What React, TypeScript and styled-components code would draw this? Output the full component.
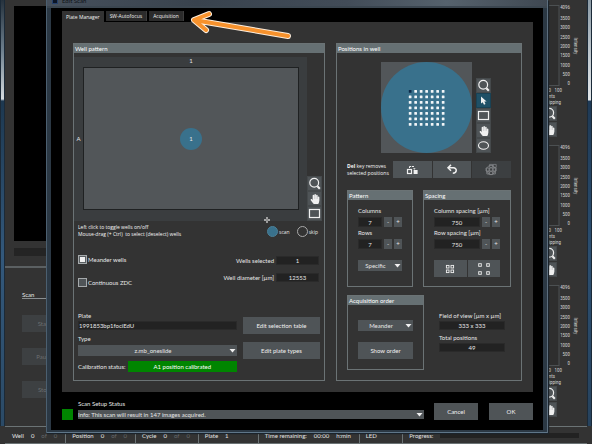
import React from "react";
import styled, { createGlobalStyle, css } from "styled-components";
import { FaHandPaper } from "react-icons/fa";

const GlobalStyle = createGlobalStyle`
  *, *::before, *::after { box-sizing: border-box; }
  body {
    margin: 0;
    background: #333333;
    color: #e6e6e6;
    font-family: Lato, "Open Sans", sans-serif;
    font-size: 6px;
    line-height: 8px;
  }
  button, input, select {
    margin: 0;
    padding: 0;
    border: 0;
    border-radius: 0;
    font: inherit;
    color: inherit;
  }
`;

const blue = "#39718c";
const line = "#6b7375";
const raised = "#4f5457";

const smallText = css`
  font-family: "Open Sans", sans-serif;
  font-size: 5px;
`;

/* ---------- main window ---------- */

const AppWindow = styled.div`
  position: relative;
  display: flex;
  flex-direction: column;
  min-height: 100vh;
  overflow: hidden;
  background: #333333;
`;

const WindowBody = styled.div`
  flex: 1;
  display: flex;
  justify-content: space-between;
`;

const WindowEdge = styled.div<{ $right?: boolean }>`
  width: 5px;
  background: ${(p) =>
    p.$right
      ? "linear-gradient(to bottom, #8b9aa5 0, #c3ccd2 60px, #e3e7ea 100px, #1f3a56 101px, #2d4f70 60%, #27435e)"
      : "linear-gradient(to bottom, #26323d 0, #6d7f8d 50px, #d5dbdf 99px, #1d3850 101px, #33587b 60%, #2b4a66)"};
  border-left: 1px solid #1b2a38;
  border-right: 1px solid #1b2a38;
`;

const LeftColumn = styled.div`
  display: flex;
  flex-direction: column;
  width: 105px;
  margin-right: auto;
`;

const CameraArea = styled.div`
  height: 235px;
  margin: 6px 0 0 9px;
  background: #000000;
`;

const CameraFooter = styled.div`
  height: 8px;
  margin: 7px 0 10px 9px;
  background: #242424;
`;

const ScanControls = styled.section`
  display: flex;
  flex-direction: column;
  gap: 16px;
  padding: 23px 0 0 17px;
  border-top: 2px solid #5b6062;
`;

const ScanHeading = styled.h2`
  margin: 0;
  font-size: 6px;
  font-weight: 400;
  line-height: 7px;
  border-bottom: 1px solid #8a8f91;
`;

const DimButton = styled.button`
  width: 44px;
  height: 17px;
  background: #3d4042;
  color: #6b6e70;
`;

const Histograms = styled.div`
  display: flex;
  flex-direction: column;
  width: 60px;
  padding-top: 5px;
`;

const HistogramBlock = styled.section`
  height: 140px;
`;

const HistogramSvg = styled.svg`
  display: block;
  font-family: "Liberation Sans Narrow", "Roboto Condensed", Lato, sans-serif;
  font-size: 5px;
  fill: #d0d0d0;
`;

const HistogramTools = styled.div`
  display: flex;
  flex-direction: column;
  gap: 1px;
  padding-left: 15px;
`;

const StatusBar = styled.footer`
  display: grid;
  grid-template-columns: 62fr 69fr 62fr 62fr 91fr 45fr 191fr;
  height: 18px;
  margin: 0 5px;
  border-top: 1px solid ${line};
  border-bottom: 1px solid ${line};
`;

const StatusCell = styled.div<{ $divided?: boolean }>`
  display: flex;
  align-items: center;
  gap: 7px;
  padding: 1px 8px 0 6px;
  white-space: nowrap;
  border-left: ${(p) => (p.$divided ? `1px solid ${line}` : "1px solid transparent")};
`;

const Dim = styled.span`
  color: #666a6c;
`;

const ProgressTrack = styled.div`
  flex: 1;
  height: 5px;
  background: #222222;
`;

/* ---------- dialog ---------- */

const Dialog = styled.div`
  position: absolute;
  top: 0;
  left: 46px;
  right: 44px;
  padding: 0 5px 3px;
  background: #2b3844;
  box-shadow: inset 1px 0 #4b5f70, inset -1px 0 #5c6e7e, inset 0 -1px #5f7689, 1px 1px 1px #1b232b;
`;

const TitleBar = styled.header`
  height: 8px;
  margin: 0 -4px;
  overflow: hidden;
  background: linear-gradient(to right, #46505c, #39434e 30%, #424c58 60%, #56626d 80%, #3f4852);
  border-bottom: 2px solid #3b4650;
`;

const TitleContent = styled.div`
  display: flex;
  gap: 4px;
  margin-top: -3px;
  padding-left: 5px;
  line-height: 8px;
  color: #0d1116;
`;

const TitleIcon = styled.span`
  width: 6px;
  height: 7px;
  background: #0b1526;
  border: 1px solid #25406b;
`;

const DialogBody = styled.div`
  padding: 3px 10px 10px 11px;
  background: #000000;
`;

const TabList = styled.div`
  display: flex;
  align-items: flex-end;
  gap: 2px;
`;

const Tab = styled.button<{ $active?: boolean }>`
  ${smallText}
  height: ${(p) => (p.$active ? 11 : 10)}px;
  margin-bottom: ${(p) => (p.$active ? 0 : 1)}px;
  padding: 0 4px;
  line-height: 8px;
  background: ${(p) => (p.$active ? "#333333" : "#2b2b2b")};
  color: #f2f2f2;
  border-right: ${(p) => (p.$active ? "0" : "1px solid #3d3d3d")};
`;

const TabPanel = styled.div`
  display: grid;
  grid-template-columns: 252fr 186fr;
  gap: 11px;
  padding: 21px 11px 11px;
  background: #333333;
`;

const Group = styled.section`
  border: 1px solid ${line};
  min-width: 0;
`;

const GroupTitle = styled.h3`
  height: 9px;
  margin: 0;
  padding-left: 1px;
  font-size: 6px;
  font-weight: 400;
  line-height: 9px;
  color: #ffffff;
  background: #667073;
`;

const Button = styled.button<{ $faded?: boolean }>`
  display: flex;
  align-items: center;
  justify-content: center;
  width: 100%;
  height: 17px;
  white-space: nowrap;
  background: ${(p) => (p.$faded ? "#3c3f41" : raised)};
  color: ${(p) => (p.$faded ? "#8a8d8f" : "#f0f0f0")};
`;

const ToolButton = styled.button<{ $active?: boolean }>`
  display: flex;
  align-items: center;
  justify-content: center;
  width: 15px;
  height: 15px;
  background: ${(p) => (p.$active ? "#1f5066" : raised)};
  border: 1px solid ${(p) => (p.$active ? "#1a4254" : "#45494b")};
  color: #f0f0f0;
`;

const field = css`
  display: block;
  width: 100%;
  min-width: 0;
  height: 9px;
  background: #222222;
  border: 1px solid #2a2a2a;
  line-height: 7px;
`;

const TextField = styled.input<{ $centered?: boolean }>`
  ${field}
  text-align: ${(p) => (p.$centered ? "center" : "left")};
`;

const StepField = styled(TextField)`
  height: 10px;
`;

const SelectWrap = styled.div<{ $short?: boolean }>`
  position: relative;
  height: ${(p) => (p.$short ? 9 : 11)}px;
  background: ${raised};
`;

const Select = styled.select<{ $centered?: boolean }>`
  display: block;
  width: 100%;
  height: 100%;
  padding-right: ${(p) => (p.$centered ? 9 : 0)}px;
  appearance: none;
  background: transparent;
  text-align: ${(p) => (p.$centered ? "center" : "left")};
  text-align-last: ${(p) => (p.$centered ? "center" : "left")};
`;

const SelectArrow = styled.svg`
  position: absolute;
  right: 1px;
  top: calc(50% - 2px);
  pointer-events: none;
`;

const Label = styled.label`
  display: block;
  height: 8px;
  white-space: nowrap;
`;

/* well pattern */

const PlateRow = styled.div`
  display: flex;
  align-items: flex-end;
  padding: 4px 2px 0 0;
`;

const PlateMap = styled.div`
  position: relative;
  flex: 1;
  display: grid;
  grid-template: 10px 1fr 11px / 9px 1fr 8px;
  height: 164px;
  background: #3a3d3f;
`;

const ColumnHead = styled.span`
  grid-column: 2;
  text-align: center;
`;

const RowHead = styled.span`
  grid-row: 2;
  align-self: center;
  text-align: center;
`;

const Plate = styled.div`
  grid-row: 2;
  grid-column: 2;
  display: flex;
  align-items: center;
  justify-content: center;
  background: #525659;
  border: 1px solid #1f2122;
`;

const Well = styled.button`
  width: 22px;
  height: 22px;
  border-radius: 50%;
  background: ${blue};
`;

const MoveCursor = styled.svg`
  position: absolute;
  right: 37px;
  bottom: -2px;
`;

const ToolColumn = styled.div`
  display: flex;
  flex-direction: column;
`;

const HintRow = styled.div`
  display: flex;
  justify-content: space-between;
  padding: 3px 6px 0 4px;
`;

const Hint = styled.p`
  ${smallText}
  margin: 0;
  line-height: 7px;
  white-space: nowrap;
  color: #f6f6f6;
`;

const Legend = styled.div`
  display: flex;
  gap: 7px;
  padding-top: 2px;
`;

const LegendItem = styled.span`
  ${smallText}
  display: flex;
  align-items: center;
  gap: 1px;
  height: 11px;
`;

const LegendDot = styled.span<{ $filled?: boolean }>`
  width: 11px;
  height: 11px;
  border-radius: 50%;
  background: ${(p) => (p.$filled ? blue : "transparent")};
  border: 1px solid ${(p) => (p.$filled ? "#4b7f97" : "#a8a8a8")};
`;

const Options = styled.div`
  display: flex;
  justify-content: space-between;
  padding: 17px 5px 0 4px;
`;

const CheckStack = styled.div`
  display: flex;
  flex-direction: column;
  gap: 14px;
`;

const CheckLabel = styled.label`
  display: flex;
  align-items: center;
  gap: 1px;
  height: 9px;
`;

const CheckBox = styled.input`
  appearance: none;
  width: 9px;
  height: 9px;
  border: 1px solid #a5a9ab;
  background: #4f5457;
  &:checked {
    background: #f0f0f0;
    box-shadow: inset 0 0 0 1px #5a5f62;
  }
`;

const ValueStack = styled.div`
  display: grid;
  grid-template-columns: auto 43px;
  gap: 8px 2px;
  align-content: start;
  align-items: center;
  padding-top: 1px;
  text-align: right;
`;

const PlateForm = styled.div`
  display: grid;
  grid-template-columns: 1fr 77px;
  gap: 6px;
  padding: 25px 4px 8px;
`;

const FormStack = styled.div`
  display: flex;
  flex-direction: column;
  gap: 5px;
`;

const Stacked = styled.div<{ $gap?: number }>`
  display: grid;
  gap: ${(p) => p.$gap ?? 1}px;
`;

const ButtonStack = styled.div`
  display: flex;
  flex-direction: column;
  gap: 8px;
  padding-top: 5px;
`;

const Calibration = styled.div`
  display: flex;
  align-items: center;
  gap: 2px;
  white-space: nowrap;
`;

const CalibrationBadge = styled.output`
  flex: 1;
  height: 11px;
  line-height: 11px;
  text-align: center;
  color: #ffffff;
  background: #008500;
`;

/* positions in well */

const WellViewRow = styled.div`
  display: flex;
  align-items: flex-end;
  justify-content: center;
  gap: 4px;
  padding: 9px 0 0 14px;
`;

const WellView = styled.svg`
  display: block;
  background: #525659;
`;

const PositionActions = styled.div`
  display: grid;
  grid-template-columns: 1fr 118px;
  padding: 8px 10px 0;
`;

const PositionHint = styled(Hint)`
  align-self: center;
`;

const ActionButtons = styled.div`
  display: grid;
  grid-auto-flow: column;
  grid-auto-columns: 1fr;
  gap: 1px;
`;

const Settings = styled.div`
  display: grid;
  grid-template-columns: 66fr 88fr;
  gap: 10px;
  padding: 12px 10px 0;
`;

const SettingsBody = styled.div`
  display: flex;
  flex-direction: column;
  gap: 2px;
  padding: 7px 10px 9px;
`;

const Stepper = styled.div`
  display: grid;
  grid-template-columns: 1fr 8px 8px;
  gap: 2px;
  height: 10px;
  align-items: stretch;
`;

const StepButton = styled.button`
  background: ${raised};
  line-height: 8px;
`;

const SettingsFooter = styled.div`
  padding-top: 9px;
`;

const OrderRow = styled.div`
  display: grid;
  grid-template-columns: 77fr 66fr;
  gap: 15px;
  padding: 8px 16px 9px 10px;
`;

const OrderBody = styled.div`
  display: flex;
  flex-direction: column;
  gap: 11px;
  padding: 15px 10px 10px;
`;

const Totals = styled.div`
  display: flex;
  flex-direction: column;
  gap: 4px;
  padding-top: 17px;
`;

/* dialog footer */

const DialogFooter = styled.footer`
  display: flex;
  align-items: flex-end;
  padding-top: 8px;
`;

const StatusLight = styled.span`
  width: 11px;
  height: 11px;
  margin-right: 5px;
  background: #008500;
`;

const ScanStatus = styled.div`
  flex: 1;
  display: grid;
  gap: 2px;
  padding-bottom: 1px;
`;

const FooterButtons = styled.div`
  display: grid;
  grid-template-columns: 44px 44px;
  gap: 11px;
  padding-left: 10px;
`;

const Annotation = styled.svg`
  position: absolute;
  left: 140px;
  top: 8px;
  pointer-events: none;
`;

/* ---------- icons ---------- */

const ZoomIcon = () => (
  <svg width="13" height="13" viewBox="0 0 13 13" fill="none" stroke="currentColor" aria-hidden="true">
    <circle cx="6.2" cy="5.8" r="4.4" strokeWidth="1.2" />
    <path d="M9.4 9.2 L11.8 11.8" strokeWidth="2" />
  </svg>
);

const RectIcon = () => (
  <svg width="13" height="13" viewBox="0 0 13 13" fill="none" stroke="currentColor" aria-hidden="true">
    <rect x="1.5" y="2.5" width="10" height="8" strokeWidth="1.2" />
  </svg>
);

const EllipseIcon = () => (
  <svg width="13" height="13" viewBox="0 0 13 13" fill="none" stroke="currentColor" aria-hidden="true">
    <ellipse cx="6.5" cy="6.5" rx="5" ry="3.8" strokeWidth="1.1" />
  </svg>
);

const PointerIcon = () => (
  <svg width="13" height="13" viewBox="0 0 13 13" fill="currentColor" aria-hidden="true">
    <path d="M4 2.4 L4 9.6 L5.7 8.2 L7 10.8 L8.5 10.1 L7.3 7.6 L9.6 7.4 Z" />
  </svg>
);

const MovePositionsIcon = () => (
  <svg width="13" height="10" viewBox="0 0 13 10" fill="none" stroke="currentColor" aria-hidden="true">
    <rect x="1.5" y="4.5" width="4" height="4" strokeWidth="1.2" />
    <path d="M3.5 3 V1.5 H8" strokeWidth="1" strokeDasharray="3 .8" />
    <path d="M7 3.2 H9.6 L8.3 4.8 Z" fill="currentColor" stroke="none" />
    <rect x="7.6" y="5" width="4" height="4" fill="currentColor" stroke="none" />
  </svg>
);

const UndoIcon = () => (
  <svg width="12" height="11" viewBox="0 0 12 11" fill="none" stroke="currentColor" aria-hidden="true">
    <path d="M2.6 3.8 H7.4 C11.4 3.8 11.2 9.3 6.8 9.3" strokeWidth="1.5" />
    <path d="M5 .9 L2 3.8 L5 6.7" strokeWidth="1.5" />
  </svg>
);

const GridTargetIcon = () => (
  <svg width="13" height="13" viewBox="0 0 13 13" fill="none" stroke="currentColor" strokeWidth=".7" aria-hidden="true">
    <circle cx="6" cy="7" r="4.6" />
    <path d="M1 5h3v3h-3z M4.6 5h3v3h-3z M8.2 5h3v3h-3z M4.6 1.4h3v3h-3z M8.2 1.4h3v3h-3z M1.8 8.6h2.2v2.4h-2.2z M4.6 8.6h3v3h-3z M8.2 8.6h2.2v2.4h-2.2z" />
  </svg>
);

const TilesIcon = ({ pitch }: { pitch: number }) => (
  <svg width="14" height="14" viewBox="0 0 14 14" fill="none" stroke="currentColor" strokeWidth=".9" aria-hidden="true">
    {[-1, 1].flatMap((x) =>
      [-1, 1].map((y) => (
        <rect
          key={`${x}${y}`}
          x={7 + (x * pitch) / 2 - 1.3}
          y={7 + (y * pitch) / 2 - 1.3}
          width="2.6"
          height="2.6"
        />
      ))
    )}
  </svg>
);

/* ---------- pieces ---------- */

type DropDownProps = { label: string; value: string; centered?: boolean; short?: boolean; id?: string };

const DropDown = ({ label, value, centered, short, id }: DropDownProps) => (
  <SelectWrap $short={short}>
    <Select id={id} aria-label={label} $centered={centered} defaultValue={value}>
      <option>{value}</option>
    </Select>
    <SelectArrow width="7" height="4" viewBox="0 0 7 4" aria-hidden="true">
      <path d="M.5 0 H6.5 L3.5 3.6 Z" fill="#f0f0f0" />
    </SelectArrow>
  </SelectWrap>
);

const NumberStepper = ({ id, label, value }: { id: string; label: string; value: string }) => (
  <Stacked $gap={2}>
    <Label htmlFor={id}>{label}</Label>
    <Stepper>
      <StepField id={id} $centered defaultValue={value} />
      <StepButton type="button" aria-label={`Decrease ${label}`}>-</StepButton>
      <StepButton type="button" aria-label={`Increase ${label}`}>+</StepButton>
    </Stepper>
  </Stacked>
);

const ReadOut = ({ id, label, value }: { id: string; label: string; value: string }) => (
  <Stacked>
    <Label htmlFor={id}>{label}</Label>
    <TextField id={id} $centered readOnly value={value} />
  </Stacked>
);

const ticks = [3500, 3000, 2500, 2000, 1500, 1000, 500, 0];

const Histogram = () => (
  <HistogramBlock>
    <HistogramSvg width="60" height="101" viewBox="0 0 60 101">
      <rect x="-20" y=".5" width="52" height="80" fill="#2e2e2e" stroke="#4c5052" />
      <text x="43" y="4" textAnchor="end">4096</text>
      {ticks.map((t, i) => (
        <text key={t} x="43" y={15 + Math.round(i * 9.3)} textAnchor="end">{t}</text>
      ))}
      <text x="24" y="87" textAnchor="end">50</text>
      <text x="35" y="87" textAnchor="end">100</text>
      <text x="28" y="93" textAnchor="end">counts</text>
      <text x="34" y="99" textAnchor="end">clipping</text>
      <text transform="translate(47 41) rotate(90)" textAnchor="middle">Intensity</text>
    </HistogramSvg>
    <HistogramTools>
      <ToolButton type="button" aria-label="Zoom histogram"><ZoomIcon /></ToolButton>
      <ToolButton type="button" aria-label="Pan histogram"><FaHandPaper size={10} /></ToolButton>
    </HistogramTools>
  </HistogramBlock>
);

const grid = [0, 1, 2, 3, 4, 5, 6];

const counters: [string, string][] = [["Well", "0"], ["Position", "0"], ["Cycle", "0"]];

export default function App() {
  return (
    <AppWindow>
      <GlobalStyle />
      <WindowBody>
        <WindowEdge />
        <LeftColumn>
          <CameraArea />
          <CameraFooter />
          <ScanControls>
            <ScanHeading>Scan</ScanHeading>
            <DimButton type="button">Start</DimButton>
            <DimButton type="button">Pause</DimButton>
            <DimButton type="button">Stop</DimButton>
          </ScanControls>
        </LeftColumn>
        <Histograms>
          <Histogram />
          <Histogram />
          <Histogram />
        </Histograms>
        <WindowEdge $right />
      </WindowBody>
      <StatusBar>
        {counters.map(([name, value], i) => (
          <StatusCell key={name} $divided={i > 0}>
            <span>{name}</span>
            <span>{value}</span>
            <Dim>of</Dim>
            <Dim>0</Dim>
          </StatusCell>
        ))}
        <StatusCell $divided><span>Plate</span><span>1</span></StatusCell>
        <StatusCell $divided>
          <span>Time remaining:</span><span>00:00</span><span>h:min</span>
        </StatusCell>
        <StatusCell $divided>LED</StatusCell>
        <StatusCell $divided><span>Progress:</span><ProgressTrack /></StatusCell>
      </StatusBar>

      <Dialog role="dialog" aria-label="Edit Scan">
        <TitleBar>
          <TitleContent><TitleIcon />Edit Scan</TitleContent>
        </TitleBar>
        <DialogBody>
          <TabList role="tablist">
            <Tab type="button" role="tab" aria-selected $active>Plate Manager</Tab>
            <Tab type="button" role="tab">SW-Autofocus</Tab>
            <Tab type="button" role="tab">Acquisition</Tab>
          </TabList>
          <TabPanel role="tabpanel">
            <Group>
              <GroupTitle>Well pattern</GroupTitle>
              <PlateRow>
                <PlateMap>
                  <ColumnHead>1</ColumnHead>
                  <RowHead>A</RowHead>
                  <Plate><Well type="button">1</Well></Plate>
                  <MoveCursor width="6" height="6" viewBox="0 0 6 6" aria-hidden="true">
                    <path d="M3 0V6M0 3H6" stroke="#c8c8c8" strokeWidth="1.4" />
                    <circle cx="3" cy="3" r=".7" fill="#333333" />
                  </MoveCursor>
                </PlateMap>
                <ToolColumn>
                  <ToolButton type="button" aria-label="Zoom"><ZoomIcon /></ToolButton>
                  <ToolButton type="button" aria-label="Pan"><FaHandPaper size={10} /></ToolButton>
                  <ToolButton type="button" aria-label="Rectangle"><RectIcon /></ToolButton>
                </ToolColumn>
              </PlateRow>
              <HintRow>
                <Hint>
                  Left click to toggle wells on/off<br />
                  Mouse-drag (+ Ctrl)&nbsp; to select (deselect) wells
                </Hint>
                <Legend>
                  <LegendItem><LegendDot $filled />scan</LegendItem>
                  <LegendItem><LegendDot />skip</LegendItem>
                </Legend>
              </HintRow>
              <Options>
                <CheckStack>
                  <CheckLabel><CheckBox type="checkbox" defaultChecked />Meander wells</CheckLabel>
                  <CheckLabel><CheckBox type="checkbox" />Continuous ZDC</CheckLabel>
                </CheckStack>
                <ValueStack>
                  <Label htmlFor="wells">Wells selected</Label>
                  <TextField id="wells" $centered readOnly value="1" />
                  <Label htmlFor="diameter">Well diameter [µm]</Label>
                  <TextField id="diameter" $centered readOnly value="12553" />
                </ValueStack>
              </Options>
              <PlateForm>
                <FormStack>
                  <Stacked>
                    <Label htmlFor="plate">Plate</Label>
                    <TextField id="plate" defaultValue="1991853bp1fociEdU" />
                  </Stacked>
                  <Stacked $gap={2}>
                    <Label htmlFor="type">Type</Label>
                    <DropDown id="type" label="Type" value="z.mb_oneslide" centered />
                  </Stacked>
                  <Calibration>
                    <span>Calibration status:</span>
                    <CalibrationBadge>A1 position calibrated</CalibrationBadge>
                  </Calibration>
                </FormStack>
                <ButtonStack>
                  <Button type="button">Edit selection table</Button>
                  <Button type="button">Edit plate types</Button>
                </ButtonStack>
              </PlateForm>
            </Group>

            <Group>
              <GroupTitle>Positions in well</GroupTitle>
              <WellViewRow>
                <WellView width="91" height="91" viewBox="0 0 91 91" role="img" aria-label="Positions in well">
                  <circle cx="45.5" cy="45.5" r="45.5" fill={blue} />
                  {grid.flatMap((row) =>
                    grid.map((col) => (
                      <rect
                        key={`${row}-${col}`}
                        x={27.8 + col * 5.5}
                        y={28 + row * 5.5}
                        width="2.7"
                        height="2.7"
                        rx=".5"
                        fill={row + col === 0 ? "#0c2a4a" : "#f2f6f8"}
                      />
                    ))
                  )}
                </WellView>
                <ToolColumn>
                  <ToolButton type="button" aria-label="Zoom"><ZoomIcon /></ToolButton>
                  <ToolButton type="button" aria-label="Select" $active><PointerIcon /></ToolButton>
                  <ToolButton type="button" aria-label="Rectangle"><RectIcon /></ToolButton>
                  <ToolButton type="button" aria-label="Pan"><FaHandPaper size={10} /></ToolButton>
                  <ToolButton type="button" aria-label="Ellipse"><EllipseIcon /></ToolButton>
                </ToolColumn>
              </WellViewRow>
              <PositionActions>
                <PositionHint><b>Del</b> key removes<br />selected positions</PositionHint>
                <ActionButtons>
                  <Button type="button" aria-label="Move positions"><MovePositionsIcon /></Button>
                  <Button type="button" aria-label="Undo"><UndoIcon /></Button>
                  <Button type="button" aria-label="Fill well" $faded><GridTargetIcon /></Button>
                </ActionButtons>
              </PositionActions>
              <Settings>
                <Group>
                  <GroupTitle>Pattern</GroupTitle>
                  <SettingsBody>
                    <NumberStepper id="columns" label="Columns" value="7" />
                    <NumberStepper id="rows" label="Rows" value="7" />
                    <SettingsFooter>
                      <DropDown label="Pattern type" value="Specific" centered />
                    </SettingsFooter>
                  </SettingsBody>
                </Group>
                <Group>
                  <GroupTitle>Spacing</GroupTitle>
                  <SettingsBody>
                    <NumberStepper id="colspacing" label="Column spacing [µm]" value="750" />
                    <NumberStepper id="rowspacing" label="Row spacing [µm]" value="750" />
                    <SettingsFooter>
                      <ActionButtons>
                        <Button type="button" aria-label="Tight spacing"><TilesIcon pitch={4.6} /></Button>
                        <Button type="button" aria-label="Wide spacing"><TilesIcon pitch={8} /></Button>
                      </ActionButtons>
                    </SettingsFooter>
                  </SettingsBody>
                </Group>
              </Settings>
              <OrderRow>
                <Group>
                  <GroupTitle>Acquisition order</GroupTitle>
                  <OrderBody>
                    <DropDown label="Acquisition order" value="Meander" centered />
                    <Button type="button">Show order</Button>
                  </OrderBody>
                </Group>
                <Totals>
                  <ReadOut id="fov" label="Field of view [µm x µm]" value="333 x 333" />
                  <ReadOut id="total" label="Total positions" value="49" />
                </Totals>
              </OrderRow>
            </Group>
          </TabPanel>
          <DialogFooter>
            <StatusLight />
            <ScanStatus>
              <Label htmlFor="status">Scan Setup Status</Label>
              <DropDown
                id="status"
                label="Scan Setup Status"
                value="Info: This scan will result in 147 images acquired."
                short
              />
            </ScanStatus>
            <FooterButtons>
              <Button type="button">Cancel</Button>
              <Button type="button">OK</Button>
            </FooterButtons>
          </DialogFooter>
        </DialogBody>
        <Annotation width="108" height="34" viewBox="0 0 108 34" fill="none" strokeLinecap="round" strokeLinejoin="round" aria-hidden="true">
          <path d="M102 28 L8 12 M23 6 L8 12 L20 22" stroke="#fdeedd" strokeWidth="6" />
          <path d="M102 28 L8 12 M23 6 L8 12 L20 22" stroke="#f7922d" strokeWidth="4" />
        </Annotation>
      </Dialog>
    </AppWindow>
  );
}
